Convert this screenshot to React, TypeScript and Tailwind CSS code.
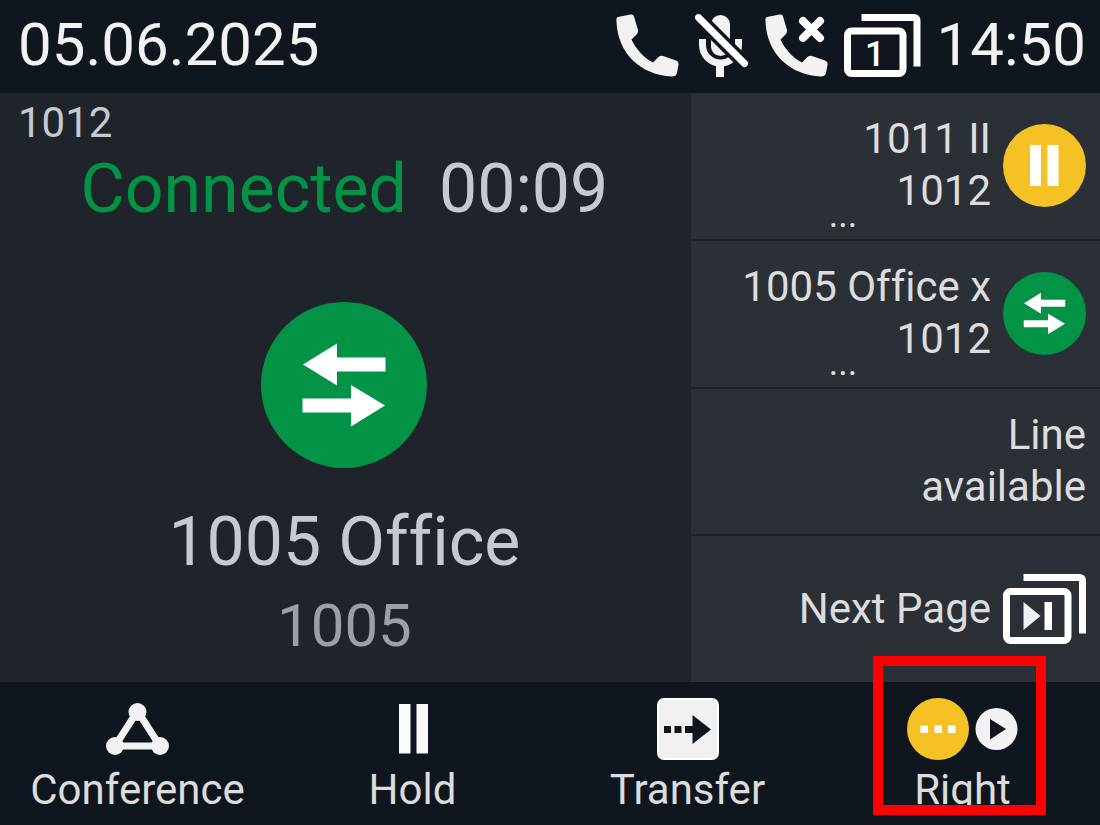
import React from 'react';

interface LineKey {
  id: string;
  lines: string[];
  truncated?: boolean;
  icon?: React.ReactNode;
}

interface SoftKey {
  label: string;
  icon: React.ReactNode;
  highlighted?: boolean;
}

const HANDSET =
  'M2 3Q0 3 .5 8C2 40 25 61 56 62.5Q60 62.5 61 59L62.5 51Q63 47.5 60 46.5L47 42Q44 41 42 43.5L37 48.5C29 45 19 34 15.5 25.5L21 20Q22.5 18.5 22 16L18 2.5Q17.5 0 14.5 .5Z';

function PhoneIcon({ missed = false }: { missed?: boolean }) {
  return (
    <svg width="63" height="63" viewBox="0 0 63 63" aria-hidden="true">
      <path d={HANDSET} fill="#f2f2f2" />
      {missed && (
        <path d="M38 7L55 24M55 7L38 24" stroke="#fff" strokeWidth="8" strokeLinecap="round" />
      )}
    </svg>
  );
}

function MicOffIcon() {
  return (
    <svg width="54" height="63" viewBox="0 0 54 63" fill="none" aria-hidden="true">
      <rect x="16" y="1" width="19" height="41" rx="9.5" fill="#f2f2f2" />
      <path d="M7.5 25V31a18 18 0 0 0 36 0V25" stroke="#f2f2f2" strokeWidth="7" />
      <rect x="21" y="49" width="8" height="14" fill="#f2f2f2" />
      <path d="M0 0L54 54" stroke="#0f161d" strokeWidth="14" />
      <path d="M3.5 3.5L49.5 49.5" stroke="#fff" strokeWidth="7" strokeLinecap="round" />
    </svg>
  );
}

function PageIcon() {
  return (
    <svg width="77" height="63" viewBox="0 0 77 63" fill="none" aria-hidden="true">
      <rect x="3.5" y="17" width="55.5" height="42.5" rx="4" stroke="#fff" strokeWidth="7" />
      <path d="M17.5 3.5H69.5q3.5 0 3.5 3.5V52.5" stroke="#fff" strokeWidth="7" />
      <text x="31" y="52" textAnchor="middle" fontSize="35" fontWeight="500" fill="#fff">1</text>
    </svg>
  );
}

function NextPageIcon() {
  return (
    <svg width="83" height="70" viewBox="0 0 83 70" fill="none" aria-hidden="true">
      <rect x="3.5" y="17.5" width="61.5" height="49" rx="4" stroke="#fff" strokeWidth="7" />
      <path d="M20.5 3.5H76q3.5 0 3.5 3.5V59.5" stroke="#fff" strokeWidth="7" />
      <path d="M20.5 28L37.5 42L20.5 56Z" fill="#f2f2f2" />
      <rect x="41.5" y="28" width="7.5" height="28" fill="#fff" />
    </svg>
  );
}

function SwapIcon({ size }: { size: number }) {
  return (
    <svg width={size} height={size} viewBox="0 0 166 166" aria-hidden="true">
      <circle cx="83" cy="83" r="83" fill="#039347" />
      <path d="M42 62.5L76 41.5V55.5H124.5V69.5H76V83.5Z" fill="#fff" />
      <path d="M124 103.5L90 124.5V110.5H41.5V96.5H90V83Z" fill="#fff" />
    </svg>
  );
}

function HeldIcon() {
  return (
    <svg width="83" height="83" viewBox="0 0 83 83" aria-hidden="true">
      <circle cx="41.5" cy="41.5" r="41.5" fill="#f4c225" />
      <rect x="27" y="21" width="11" height="41" fill="#fff" />
      <rect x="44.5" y="21" width="11" height="41" fill="#fff" />
    </svg>
  );
}

function ConferenceIcon() {
  return (
    <svg width="63" height="62" viewBox="0 0 63 62" fill="#f2f2f2" aria-hidden="true">
      <path d="M31.5 13L9 48H54Z" fill="none" stroke="#f2f2f2" strokeWidth="7" />
      <circle cx="31.5" cy="14" r="9" />
      <circle cx="9" cy="48" r="9" />
      <circle cx="54" cy="48" r="9" />
    </svg>
  );
}

function HoldIcon() {
  return (
    <svg width="62" height="62" viewBox="0 0 62 62" fill="#fafafa" aria-hidden="true">
      <rect x="17" y="6" width="11.5" height="49.5" />
      <rect x="34.5" y="6" width="11.5" height="49.5" />
    </svg>
  );
}

function TransferIcon() {
  return (
    <svg width="62" height="62" viewBox="0 0 62 62" fill="#0f161d" aria-hidden="true">
      <rect x="1" y="1" width="60" height="60" rx="6" fill="#f0f0f0" stroke="#fff" strokeWidth="2" />
      <rect x="7" y="28" width="7" height="7" />
      <rect x="17.5" y="28" width="7" height="7" />
      <path d="M28 28H35.5V17L54 31.5L35.5 46V35H28Z" />
    </svg>
  );
}

function RightIcon() {
  return (
    <svg width="111" height="62" viewBox="0 0 111 62" fill="#fff" aria-hidden="true">
      <circle cx="31" cy="31" r="31" fill="#f4c225" />
      <rect x="13.5" y="27.5" width="7.5" height="7.5" />
      <rect x="27.5" y="27.5" width="7.5" height="7.5" />
      <rect x="41" y="27.5" width="7.5" height="7.5" />
      <circle cx="89.5" cy="31" r="21" fill="#f2f2f2" />
      <path d="M83 21L99 31L83 41.5Z" fill="#0f161d" />
    </svg>
  );
}

const lineKeys: LineKey[] = [
  { id: 'held', lines: ['1011 II', '1012'], truncated: true, icon: <HeldIcon /> },
  { id: 'active', lines: ['1005 Office x', '1012'], truncated: true, icon: <SwapIcon size={83} /> },
  { id: 'free', lines: ['Line', 'available'] },
  { id: 'next', lines: ['Next Page'], icon: <NextPageIcon /> },
];

const softKeys: SoftKey[] = [
  { label: 'Conference', icon: <ConferenceIcon /> },
  { label: 'Hold', icon: <HoldIcon /> },
  { label: 'Transfer', icon: <TransferIcon /> },
  { label: 'Right', icon: <RightIcon />, highlighted: true },
];

function StatusBar() {
  return (
    <header className="flex items-center justify-between pt-[9px] pb-3 pl-[18px] pr-3.5 text-[60px] leading-[72px] text-[#f2f2f2]">
      <time>05.06.2025</time>
      <div className="flex items-center gap-4">
        <PhoneIcon />
        <MicOffIcon />
        <PhoneIcon missed />
        <PageIcon />
        <time>14:50</time>
      </div>
    </header>
  );
}

function CallPanel() {
  return (
    <section className="flex-1 bg-[#1f242b] pt-1 pr-0.5 text-center text-[#c5cad1]">
      <p className="pl-[18px] text-left text-[42px] leading-[52px]">1012</p>
      <div className="flex justify-center gap-8 text-[68px] leading-[80px]">
        <span className="text-[#039347]">Connected</span>
        <span>00:09</span>
      </div>
      <div className="mt-[73px] mb-[34px] flex justify-center">
        <SwapIcon size={166} />
      </div>
      <h1 className="text-[68px] leading-[80px]">1005 Office</h1>
      <p className="mt-2 text-[60px] leading-[72px] text-[#9ba0a7]">1005</p>
    </section>
  );
}

function LineKeyRow({ item }: { item: LineKey }) {
  return (
    <button
      type="button"
      className="flex flex-1 items-center gap-3 bg-[#2b3037] pr-3.5 text-right text-[42px] leading-[52px] text-[#dcdcdc]"
    >
      <span className={item.truncated ? 'flex-1 pb-1' : 'flex-1'}>
        {item.lines.map((line) => (
          <span key={line} className="block">{line}</span>
        ))}
        {item.truncated && (
          <span className="-mt-0.5 block pl-1 text-center text-[36px] leading-[0px]">...</span>
        )}
      </span>
      {item.icon}
    </button>
  );
}

function SoftKeyButton({ item }: { item: SoftKey }) {
  return (
    <button type="button" className="relative flex flex-col items-center gap-1.5 pt-4 pb-[11px]">
      {item.icon}
      <span className="text-[42px] leading-[48px] text-[#dcdcdc]">{item.label}</span>
      {item.highlighted && (
        <span className="pointer-events-none absolute -top-[26px] right-[54px] bottom-[10px] left-12 z-10 border-10 border-[#ff0000]" />
      )}
    </button>
  );
}

export default function App() {
  return (
    <div className="flex min-h-screen flex-col bg-[#0f161d] font-['Roboto',sans-serif] [font-variant-ligatures:none]">
      <StatusBar />
      <main className="flex flex-1">
        <CallPanel />
        <nav className="flex w-[37.2%] flex-col gap-0.5 bg-[#1c2128]">
          {lineKeys.map((item) => (
            <LineKeyRow key={item.id} item={item} />
          ))}
        </nav>
      </main>
      <footer className="grid grid-cols-4">
        {softKeys.map((item) => (
          <SoftKeyButton key={item.label} item={item} />
        ))}
      </footer>
    </div>
  );
}
